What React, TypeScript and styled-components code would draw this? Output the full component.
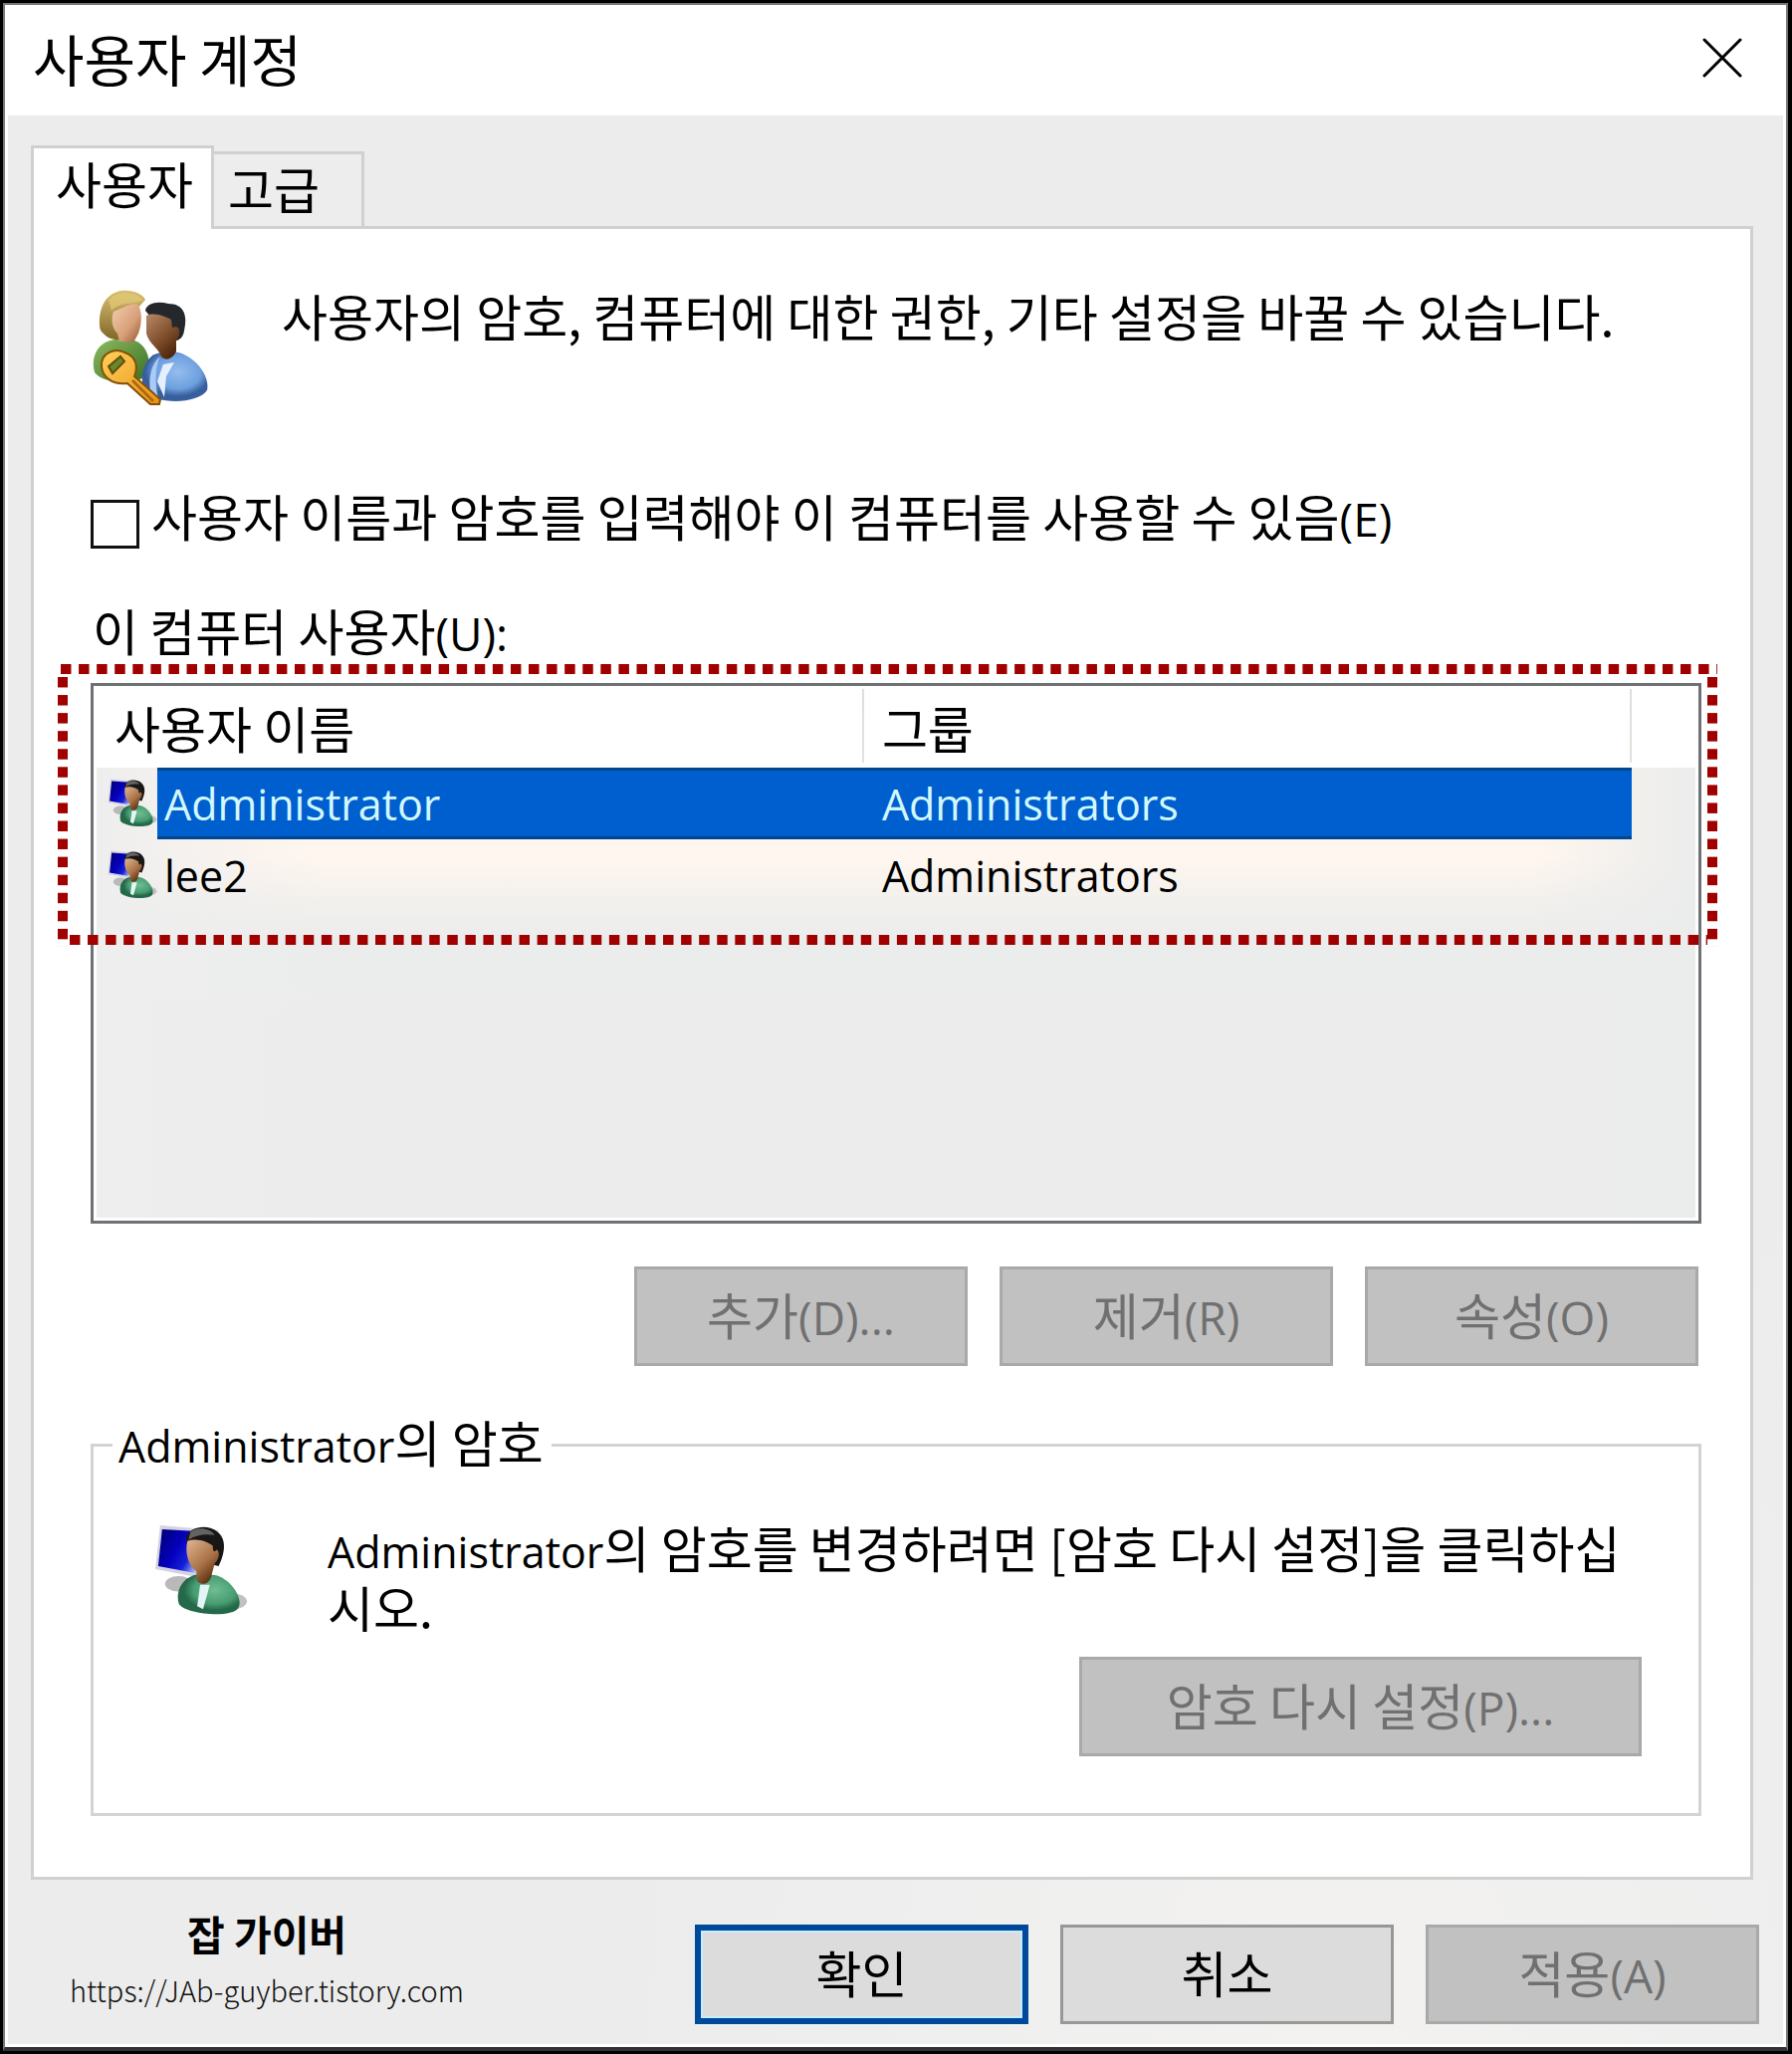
import React, { useState } from "react";
import styled, { createGlobalStyle, css } from "styled-components";

const GlobalStyle = createGlobalStyle`
  *, *::before, *::after { box-sizing: border-box; }
  body {
    margin: 0;
    background: #000;
    color: #000;
    font-family: "Noto Sans CJK KR", "Noto Sans", sans-serif;
    font-size: 50px;
    line-height: 60px;
  }
  button, input { font: inherit; color: inherit; }
`;

const Latin = styled.span`
  font-family: "Open Sans", "Noto Sans", sans-serif;
  font-size: 43px;
  line-height: 1;
`;

const Hotkey = styled(Latin)`
  font-size: 46px;
`;

const Dialog = styled.main`
  margin: 3px 4px 6px 3px;
  border: 2px solid #777;
  border-bottom: 4px solid #333;
  background: #fff;
`;

const TitleBar = styled.header`
  display: flex;
  align-items: center;
  justify-content: space-between;
  height: 111px;
  padding: 0 32px 5px 28px;
`;

const Title = styled.h1`
  margin: 0;
  font-size: 56px;
  font-weight: 400;
  line-height: 64px;
`;

const CloseButton = styled.button`
  display: flex;
  align-items: center;
  justify-content: center;
  width: 64px;
  height: 64px;
  padding: 0;
  border: 0;
  background: none;
`;

const Body = styled.div`
  margin: 0 3px 3px;
  padding: 30px 30px 20px 23px;
  background: radial-gradient(ellipse at 75% 100%, #f3f2f1 0, #ececec 40%);
`;

const TabList = styled.div`
  display: flex;
  align-items: flex-end;
`;

const Tab = styled.button<{ $active?: boolean }>`
  display: flex;
  align-items: flex-start;
  border: 3px solid #d0d0d0;
  border-bottom: 0;
  ${(p) =>
    p.$active
      ? css`
          position: relative;
          height: 84px;
          margin-bottom: -3px;
          padding: 4px 18px 0 22px;
          background: #fff;
        `
      : css`
          height: 75px;
          margin-left: -3px;
          padding: 3px 42px 0 14px;
          background: #ededed;
        `}
`;

const Panel = styled.section`
  padding: 58px 49px 61px 57px;
  border: 3px solid #d0d0d0;
  background: #fff;
`;

const Intro = styled.div`
  display: flex;
  gap: 72px;

  p { margin: 0; line-height: 56px; }
  svg { flex: none; }
`;

const CheckRow = styled.label`
  display: flex;
  align-items: flex-end;
  gap: 12px;
  margin-top: 79px;
`;

const CheckText = styled.span`
  padding-bottom: 4px;
`;

const CheckBox = styled.input`
  appearance: none;
  flex: none;
  width: 49px;
  height: 49px;
  margin: 0;
  border: 3px solid #111;
  background: #fff;

  &:checked { box-shadow: inset 0 0 0 9px #fff; background: #111; }
`;

const ListLabel = styled.h2`
  margin: 51px 0 24px;
  padding-left: 2px;
  font-size: 50px;
  font-weight: 400;
  line-height: 60px;
`;

const ListFrame = styled.div`
  position: relative;
`;

const UserList = styled.div`
  display: flex;
  flex-direction: column;
  min-height: 543px;
  padding: 3px;
  border: 3px solid #6e7276;
  background: #fff;
`;

const ListArea = styled.div`
  flex: 1;
  background:
    linear-gradient(to right, #eeeeee 0, #eeeeee00 14%, #ebecec00 90%, #ebecec 100%),
    linear-gradient(to bottom, #fff6ef 0, #fff6ef 170px, #f1f0ed 215px, #ebedec 250px, #ebedec 290px, #ececec 330px);
`;

const Table = styled.table`
  width: 100%;
  table-layout: fixed;
  border-collapse: collapse;
`;

const ColumnHead = styled.th`
  height: 79px;
  padding: 0 0 4px 18px;
  font-weight: 400;
  text-align: left;
  background: linear-gradient(#dedede, #e6e0da) right top 0 / 2px 74px no-repeat #fff;

  &:last-child { background: #fff; }
`;

const selected = css`
  background: #005fcf;
  color: #d2f8ff;
  box-shadow: inset 0 3px #00478f, inset 0 -3px #00478f;
`;

const Cell = styled.td<{ $selected?: boolean }>`
  height: 72px;
  padding: 0 0 0 18px;
  ${(p) => p.$selected && selected}
`;

const NameCell = styled.td`
  padding: 0;

  div { display: flex; align-items: center; padding-left: 11px; }
  svg { flex: none; }
`;

const CellText = styled(Latin)`
  display: block;
  padding-top: 2px;
  line-height: 70px;
`;

const UserName = styled(CellText)<{ $selected?: boolean }>`
  flex: 1;
  height: 72px;
  padding-left: 7px;
  ${(p) => p.$selected && selected}
`;

const Highlight = styled.div`
  position: absolute;
  inset: -19px -16px auto -33px;
  height: 282px;
  pointer-events: none;
`;

const DotRow = styled.span`
  position: absolute;
  height: 10px;
  background: linear-gradient(to right, #a00000 10px, transparent 10px) 0 0 / 18px 10px;
  background-repeat: round no-repeat;

  &:first-child { inset: 0 0 auto 3px; }
  &:last-child { inset: auto 10px 0 12px; }
`;

const DotColumns = styled.span`
  position: absolute;
  inset: 13px 0 -2px;
  background:
    linear-gradient(to bottom, #a00000 10px, transparent 10px) 0 0 / 10px 18px,
    linear-gradient(to bottom, #a00000 10px, transparent 10px) 100% 0 / 10px 18px;
  background-repeat: no-repeat round, no-repeat round;
`;

const ButtonRow = styled.div`
  display: flex;
  justify-content: flex-end;
  gap: 32px;
`;

const ListActions = styled(ButtonRow)`
  margin-top: 43px;
  padding-right: 3px;
`;

const Button = styled.button<{ $wide?: boolean; $primary?: boolean }>`
  display: flex;
  align-items: center;
  justify-content: center;
  width: ${(p) => (p.$wide ? 565 : 335)}px;
  height: 100px;
  padding: 0 0 6px;
  border: 3px solid #989898;
  background: #dcdcdc;
  color: #000;

  ${(p) =>
    p.$primary &&
    css`
      border: 6px solid #00489a;
      box-shadow: inset 0 0 0 2px #c6ecff;
    `}

  &:disabled {
    border-color: #a9a9a9;
    background: #c1c1c1;
    color: #707070;
  }
`;

const Group = styled.fieldset`
  min-width: 0;
  margin: 45px 0 0;
  padding: 0 57px 57px 19px;
  border: 3px solid #d3d3d3;

  legend { padding: 0 8px 8px 6px; }
`;

const GroupText = styled.div`
  display: flex;
  gap: 80px;
  padding: 38px 0 21px 42px;

  svg { flex: none; margin-top: 8px; }
  p { margin: 0; }
`;

const Footer = styled.footer`
  display: flex;
  align-items: flex-start;
  justify-content: space-between;
  margin-right: -6px;
  padding-top: 45px;
`;

const Credit = styled.address`
  display: flex;
  flex-direction: column;
  align-items: center;
  padding-left: 39px;
  margin-top: -22px;
  font-style: normal;

  strong { font-size: 41px; font-weight: 700; line-height: 60px; }
  a {
    color: #111;
    font-size: 29px;
    font-weight: 300;
    line-height: 54px;
    text-decoration: none;
  }
`;

function CloseIcon() {
  return (
    <svg width="40" height="40" viewBox="0 0 40 40" fill="none" stroke="#000" strokeWidth="3" strokeLinecap="round">
      <path d="M2 2 38 38M38 2 2 38" />
    </svg>
  );
}

function UsersKeyIcon() {
  return (
    <svg width="120" height="120" viewBox="0 0 120 120" aria-hidden="true">
      <defs>
        <linearGradient id="uHair" x1="0" y1="0" x2="0" y2="1">
          <stop offset="0" stopColor="#d9c070" />
          <stop offset="1" stopColor="#806628" />
        </linearGradient>
        <linearGradient id="uFace" x1="0" y1="0" x2="1" y2="1">
          <stop offset="0" stopColor="#f3cfae" />
          <stop offset="0.6" stopColor="#d79f78" />
          <stop offset="1" stopColor="#8e5430" />
        </linearGradient>
        <linearGradient id="uFace2" x1="0" y1="0" x2="0.7" y2="1">
          <stop offset="0" stopColor="#b88a68" />
          <stop offset="0.6" stopColor="#7d4c2b" />
          <stop offset="1" stopColor="#4c230b" />
        </linearGradient>
        <radialGradient id="uShirt" cx="0.55" cy="0.4">
          <stop offset="0" stopColor="#95bdee" />
          <stop offset="0.7" stopColor="#6d9fdf" />
          <stop offset="1" stopColor="#375f9d" />
        </radialGradient>
        <linearGradient id="uGreen" x1="0" y1="0" x2="1" y2="1">
          <stop offset="0" stopColor="#8dba60" />
          <stop offset="1" stopColor="#376f22" />
        </linearGradient>
        <linearGradient id="uKey" x1="0" y1="0" x2="1" y2="1">
          <stop offset="0" stopColor="#ffd259" />
          <stop offset="1" stopColor="#e8901a" />
        </linearGradient>
      </defs>
      <path d="M4 86C-1 68 10 54 25 53L44 54C57 58 61 74 58 90L40 96C24 96 10 94 4 86Z" fill="url(#uGreen)" />
      <path d="M9 38C8 16 20 2 38 4C48 5 53 9 55 13L47 22L48 45C44 55 20 56 14 48C10 45 9 42 9 38Z" fill="url(#uHair)" />
      <path d="M23 25C31 22 38 17 47 17C52 24 52 36 48 47L43 56L29 55L27 47C22 42 20 34 23 25Z" fill="url(#uFace)" />
      <path d="M18 13C28 3 45 5 53 13C43 19 31 14 21 24Z" fill="#e1cb78" opacity="0.7" />
      <path d="M53 104C49 86 55 67 72 66L88 66C107 71 120 91 117 104C108 118 65 119 53 104Z" fill="url(#uShirt)" />
      <path d="M70 70C64 82 65 98 68 112L61 109C57 93 61 77 70 70Z" fill="#a9cbf5" />
      <path d="M73 78 84 76 76 90 74 111 67 95Z" fill="#e6f0fd" />
      <path d="M55 24C56 16 68 14 78 17C93 17 98 28 94 44C93 54 84 57 78 51Z" fill="#24282b" />
      <path d="M56 29C65 25 75 30 81 33C82 39 81 43 85 40C91 40 90 50 86 54L86 65C82 73 75 75 71 70C68 61 59 58 56 47Z" fill="url(#uFace2)" />
      <path d="M11 80C10 66 25 61 34 66C46 70 48 80 44 90L70 113L69 118L60 118L37 97C22 99 12 91 11 80Z" fill="url(#uKey)" stroke="#835006" strokeWidth="2" />
      <path d="M42 94 63 115" stroke="#ad6a0a" strokeWidth="3" />
      <path d="M18 80 30 70 34 75 22 87Z" fill="#668a2b" stroke="#674b0c" strokeWidth="2" />
    </svg>
  );
}

function UserMonitorIcon({ size, id }: { size: number; id: string }) {
  return (
    <svg width={size} height={size} viewBox="0 0 96 96" aria-hidden="true">
      <defs>
        <linearGradient id={`${id}s`} x1="0" y1="0" x2="1" y2="0.5">
          <stop offset="0" stopColor="#00006e" />
          <stop offset="0.45" stopColor="#0500bd" />
          <stop offset="0.7" stopColor="#1420d8" />
          <stop offset="1" stopColor="#dfe9ff" />
        </linearGradient>
        <linearGradient id={`${id}f`} x1="0" y1="0" x2="0.7" y2="1">
          <stop offset="0" stopColor="#dfb792" />
          <stop offset="0.6" stopColor="#aa7247" />
          <stop offset="1" stopColor="#56290d" />
        </linearGradient>
        <radialGradient id={`${id}g`} cx="0.6" cy="0.4">
          <stop offset="0" stopColor="#70bd91" />
          <stop offset="0.7" stopColor="#479c71" />
          <stop offset="1" stopColor="#246949" />
        </radialGradient>
      </defs>
      <ellipse cx="25" cy="61" rx="14" ry="8" fill="#b9b9b9" />
      <ellipse cx="81" cy="79" rx="14" ry="8" fill="#c1c1c1" />
      <path d="M6 1 66 6 58 57 1 46Z" fill="#d5d3e2" />
      <path d="M8 5 58 8 53 52 4 43Z" fill={`url(#${id}s)`} />
      <path d="M25 81C21 65 32 52 47 51L62 52C78 55 92 76 86 86C79 97 29 92 25 81Z" fill={`url(#${id}g)`} />
      <path d="M47 62 57 62 50 87 44 84Z" fill="#e3f5f4" />
      <path d="M32 14C37 1 56 0 65 8C75 16 72 31 66 43L54 40L34 18Z" fill="#191715" />
      <path d="M37 8C45 2 57 4 62 11C53 10 44 10 35 16Z" fill="#636363" />
      <path d="M34 17C45 14 54 18 60 22C60 28 61 29 64 26C68 28 66 37 62 40L59 51C58 61 48 64 44 58L43 48C35 42 31 29 34 17Z" fill={`url(#${id}f)`} />
    </svg>
  );
}

const users = [
  { name: "Administrator", group: "Administrators" },
  { name: "lee2", group: "Administrators" },
];

export default function App() {
  const [current, setCurrent] = useState(0);
  const [required, setRequired] = useState(false);

  return (
    <>
      <GlobalStyle />
      <Dialog>
        <TitleBar>
          <Title>사용자 계정</Title>
          <CloseButton aria-label="닫기">
            <CloseIcon />
          </CloseButton>
        </TitleBar>
        <Body>
          <TabList role="tablist">
            <Tab role="tab" aria-selected="true" $active>사용자</Tab>
            <Tab role="tab" aria-selected="false">고급</Tab>
          </TabList>
          <Panel role="tabpanel">
            <Intro>
              <UsersKeyIcon />
              <p>사용자의 암호, 컴퓨터에 대한 권한, 기타 설정을 바꿀 수 있습니다.</p>
            </Intro>
            <CheckRow>
              <CheckBox type="checkbox" checked={required} onChange={(e) => setRequired(e.target.checked)} />
              <CheckText>사용자 이름과 암호를 입력해야 이 컴퓨터를 사용할 수 있음<Hotkey>(E)</Hotkey></CheckText>
            </CheckRow>
            <ListLabel id="users-label">이 컴퓨터 사용자<Hotkey>(U):</Hotkey></ListLabel>
            <ListFrame>
              <UserList>
                <ListArea>
                  <Table aria-labelledby="users-label">
                    <colgroup>
                      <col width="48%" />
                      <col width="48%" />
                      <col width="4%" />
                    </colgroup>
                    <thead>
                      <tr>
                        <ColumnHead>사용자 이름</ColumnHead>
                        <ColumnHead>그룹</ColumnHead>
                        <ColumnHead as="td" />
                      </tr>
                    </thead>
                    <tbody>
                      {users.map((user, i) => (
                        <tr key={user.name} onClick={() => setCurrent(i)}>
                          <NameCell>
                            <div>
                              <UserMonitorIcon size={50} id={`row${i}`} />
                              <UserName $selected={i === current}>{user.name}</UserName>
                            </div>
                          </NameCell>
                          <Cell $selected={i === current}>
                            <CellText>{user.group}</CellText>
                          </Cell>
                          <td />
                        </tr>
                      ))}
                    </tbody>
                  </Table>
                </ListArea>
              </UserList>
              <Highlight>
                <DotRow />
                <DotColumns />
                <DotRow />
              </Highlight>
            </ListFrame>
            <ListActions>
              <Button disabled><span>추가<Hotkey>(D)...</Hotkey></span></Button>
              <Button disabled><span>제거<Hotkey>(R)</Hotkey></span></Button>
              <Button disabled><span>속성<Hotkey>(O)</Hotkey></span></Button>
            </ListActions>
            <Group>
              <legend><Latin>Administrator</Latin>의 암호</legend>
              <GroupText>
                <UserMonitorIcon size={94} id="account" />
                <p><Latin>Administrator</Latin>의 암호를 변경하려면 [암호 다시 설정]을 클릭하십시오.</p>
              </GroupText>
              <ButtonRow>
                <Button $wide disabled><span>암호 다시 설정<Hotkey>(P)...</Hotkey></span></Button>
              </ButtonRow>
            </Group>
          </Panel>
          <Footer>
            <Credit>
              <strong>잡 가이버</strong>
              <a href="https://JAb-guyber.tistory.com">https://JAb-guyber.tistory.com</a>
            </Credit>
            <ButtonRow>
              <Button $primary>확인</Button>
              <Button>취소</Button>
              <Button disabled><span>적용<Hotkey>(A)</Hotkey></span></Button>
            </ButtonRow>
          </Footer>
        </Body>
      </Dialog>
    </>
  );
}
